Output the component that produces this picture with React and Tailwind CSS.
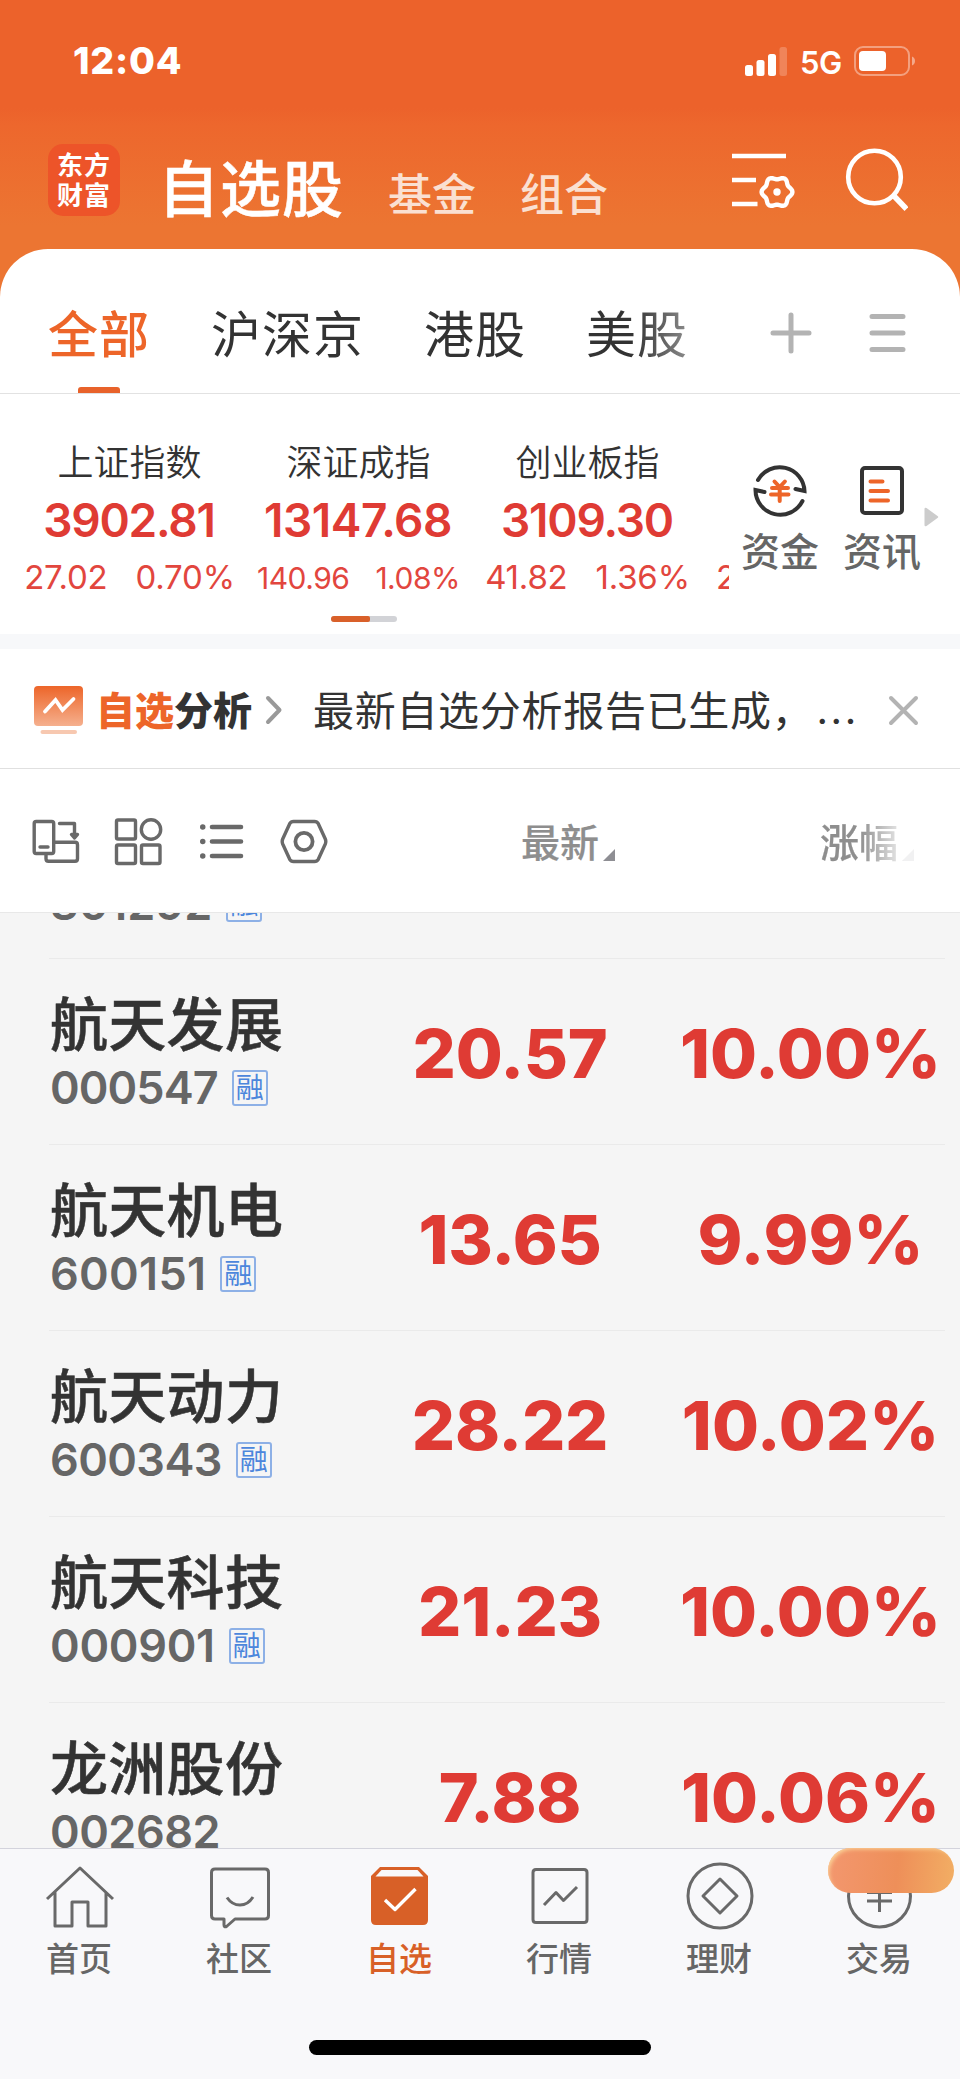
import React from 'react'

const indices = [
  { name: '上证指数', value: '3902.81', change: '27.02', pct: '0.70%' },
  { name: '深证成指', value: '13147.68', change: '140.96', pct: '1.08%', small: true },
  { name: '创业板指', value: '3109.30', change: '41.82', pct: '1.36%' },
]

const stocks = [
  { name: '航天发展', code: '000547', price: '20.57', pct: '10.00%', margin: true, track: 'tracking-[-0.9px]' },
  { name: '航天机电', code: '600151', price: '13.65', pct: '9.99%', margin: true, track: 'tracking-[0.3px]' },
  { name: '航天动力', code: '600343', price: '28.22', pct: '10.02%', margin: true, track: 'tracking-[-0.6px]' },
  { name: '航天科技', code: '000901', price: '21.23', pct: '10.00%', margin: true, track: 'tracking-[-0.3px]' },
  { name: '龙洲股份', code: '002682', price: '7.88', pct: '10.06%', margin: false, track: 'tracking-[-0.5px]' },
]

// six-lobed gear outline around (cx, cy)
function gearPoints(cx, cy) {
  const pts = []
  for (let d = 0; d < 360; d += 5) {
    const a = (d * Math.PI) / 180
    const r = 14 + 1.4 * Math.cos(6 * a)
    pts.push(`${(cx + r * Math.cos(a)).toFixed(2)},${(cy + r * Math.sin(a)).toFixed(2)}`)
  }
  return pts.join(' ')
}

function StatusBar() {
  return (
    <div className="flex h-[124px] items-center justify-between pb-[2px] pl-[73px] pr-[44px]">
      <span className="font-['Inter'] text-[37.5px] font-extrabold leading-none tracking-[0.8px] text-white">12:04</span>
      <div className="flex items-center">
        <svg width="42" height="29" viewBox="0 0 42 29" fill="white">
          <rect x="0" y="18" width="8" height="11" rx="2.5" />
          <rect x="11.5" y="13" width="8" height="16" rx="2.5" />
          <rect x="23" y="7" width="8" height="22" rx="2.5" />
          <rect x="34.5" y="0" width="7.5" height="29" rx="2.5" opacity="0.22" />
        </svg>
        <span className="ml-[13px] mt-[2px] w-[42px] whitespace-nowrap font-['Inter'] text-[31px] font-semibold leading-none tracking-[-0.5px] text-white">5G</span>
        <svg className="ml-[12px]" width="62" height="30" viewBox="0 0 62 30" fill="none">
          <rect x="1" y="1" width="54" height="28" rx="8" stroke="white" strokeOpacity="0.4" strokeWidth="2" />
          <rect x="5" y="5" width="27" height="20" rx="4" fill="white" />
          <path d="M58 10.500c4 1.500 4 7.500 0 9z" fill="white" fillOpacity="0.45" />
        </svg>
      </div>
    </div>
  )
}

function Header() {
  return (
    <div className="flex h-[125px] pl-[48px] pr-[52px]">
      <div className="mt-5 grid h-[72px] w-[72px] shrink-0 grid-cols-[27px_27px] content-center justify-center gap-y-[4px] rounded-[15px] bg-[#ed5429] pb-[3px] text-[26px] font-bold leading-[26px] text-white">
        <span>东</span><span>方</span><span>财</span><span>富</span>
      </div>
      <div className="ml-[38px] mt-[31px] w-[187px] whitespace-nowrap text-[61px] font-medium leading-none tracking-[1px] text-white [-webkit-text-stroke:0.5px_white]">自选股</div>
      <div className="ml-[43px] mt-[46px] whitespace-nowrap text-[44px] font-medium leading-none text-[#fae0d2]">基金</div>
      <div className="ml-[44px] mt-[46px] whitespace-nowrap text-[44px] font-medium leading-none text-[#fae0d2]">组合</div>
      <svg className="ml-auto mt-[22px] shrink-0" width="66" height="64" viewBox="730 146 66 64" fill="none" stroke="white" strokeWidth="4.400">
        <path d="M732 156h54M732 180h24M732 204h25.500" />
        <polygon points={gearPoints(777, 192)} strokeLinejoin="round" />
        <circle cx="777" cy="192" r="3.700" fill="white" stroke="none" />
      </svg>
      <svg className="ml-[48px] mt-[22px] shrink-0" width="64" height="66" viewBox="844 146 64 66" fill="none" stroke="white" strokeWidth="4.600">
        <circle cx="874.500" cy="177" r="26.300" />
        <path d="M893.500 195.500l13 13.500" strokeWidth="5.500" />
      </svg>
    </div>
  )
}

function MarketTabs() {
  return (
    <div className="flex h-[145px] border-b border-[#e2e2e2] pl-[48px] pr-[54px] text-[50px] leading-none tracking-[1px] text-[#333]">
      <div className="-mb-px flex w-[102px] flex-col items-center justify-between whitespace-nowrap pb-px pt-[57px] font-medium text-[#ed6529]">
        全部
        <div className="h-[6px] w-[42px] rounded-t-[3px] bg-[#e8622a]" />
      </div>
      <div className="ml-[61px] whitespace-nowrap pt-[57px]">沪深京</div>
      <div className="ml-[60px] whitespace-nowrap pt-[57px]">港股</div>
      <div className="ml-[60px] pt-[57px]">
        <div className="whitespace-nowrap bg-gradient-to-r from-[#333] from-45% to-[#8c8c8c] bg-clip-text pb-2 text-transparent">美股</div>
      </div>
      <svg className="ml-auto mt-[63px]" width="42" height="42" viewBox="0 0 42 42" stroke="#b3b3b3" strokeWidth="5" strokeLinecap="round">
        <path d="M3 21h36M21 3v36" />
      </svg>
      <svg className="ml-[57px] mt-[64px]" width="37" height="40" viewBox="0 0 37 40" stroke="#b3b3b3" strokeWidth="5" strokeLinecap="round">
        <path d="M3 3.500h31M3 20h31M3 36.500h31" />
      </svg>
    </div>
  )
}

function IndexStrip() {
  return (
    <div className="flex h-[240px]">
      <div className="flex w-[729px] flex-col overflow-hidden pl-[15px]">
        <div className="flex pt-[48px]">
          {indices.map((it) => (
            <div key={it.name} className="flex w-[229px] shrink-0 flex-col items-center">
              <div className="text-[36px] font-[350] leading-none text-[#333]">{it.name}</div>
              <div className={`mt-[19px] pr-[1px] font-['Inter'] text-[46px] font-semibold leading-none text-[#df3b34] ${it.small ? 'tracking-[-0.5px]' : 'tracking-[-1.2px]'}`}>{it.value}</div>
              <div className={`mt-[18px] flex h-[33px] items-center whitespace-nowrap font-['Inter'] leading-none text-[#e2463e] ${it.small ? 'gap-[26px] text-[30px] tracking-[-0.5px]' : 'gap-[28px] text-[33px] tracking-[-0.2px]'}`}>
                <span>{it.change}</span>
                <span>{it.pct}</span>
              </div>
            </div>
          ))}
          <div className="ml-[14px] mt-[119px] font-['Inter'] text-[33px] leading-none text-[#e2463e]">2</div>
        </div>
        <div className="ml-[316px] mt-[22px] flex h-[6px] w-[66px] shrink-0 overflow-hidden rounded-full bg-[#d2d3d7]">
          <div className="w-[39px] rounded-r-[2px] bg-[#d9602a]" />
        </div>
      </div>
      <div className="flex flex-1 pl-[12px] pt-[67px] text-[39px] font-medium leading-none text-[#666]">
        <div className="flex w-[78px] flex-col items-center whitespace-nowrap">
          <svg width="58" height="58" viewBox="751 461 58 58" fill="none" stroke="#333" strokeWidth="4">
            <path strokeLinecap="round" d="M758 480A24.800 24.800 0 0 1 804.500 491L795.500 489" />
            <path strokeLinecap="round" d="M802.500 501A24.800 24.800 0 0 1 755.500 490L764.500 492" />
            <g stroke="#ed6529" strokeLinecap="round">
              <path d="M774.500 481.500l5.200 5.500 5.200-5.500M772 488h16M771 494.500h17.500M779.700 488v13" />
            </g>
          </svg>
          <div className="mt-[11px]">资金</div>
        </div>
        <div className="ml-[24px] flex w-[78px] flex-col items-center whitespace-nowrap">
          <svg width="58" height="58" viewBox="853 461 58 58" fill="none" stroke="#333" strokeWidth="4">
            <rect x="862" y="468" width="40" height="45" rx="3" />
            <path d="M870.500 481.500h12M870.500 491h17.500M870.500 500.500h17.500" stroke="#ed6529" strokeLinecap="round" />
          </svg>
          <div className="mt-[11px]">资讯</div>
        </div>
        <svg className="ml-[3px] mt-[46px]" width="15" height="21" viewBox="0 0 15 21">
          <path d="M0.500 2q0-2 2-1l11 8q1.500 1 0 2l-11 8q-2 1-2-1z" fill="#ccc" />
        </svg>
      </div>
    </div>
  )
}

function NoticeBar() {
  return (
    <div className="flex h-[120px] items-center border-b border-[#e0e0e0] pl-[34px] pr-[41px] pt-[3px]">
      <svg width="49" height="48" viewBox="0 0 49 48" fill="none">
        <defs>
          <linearGradient id="chip" x1="0" y1="0" x2="0" y2="1">
            <stop offset="0" stopColor="#ed6529" />
            <stop offset="1" stopColor="#f5b08e" />
          </linearGradient>
        </defs>
        <rect width="49" height="40" rx="4" fill="url(#chip)" />
        <path d="M11 25.500L21.500 14l7 10L39.500 13" stroke="white" strokeWidth="3.800" strokeLinecap="round" />
        <rect x="6.500" y="44" width="36.500" height="4" rx="2" fill="#f7c8b0" />
      </svg>
      <div className="ml-[13px] w-[158px] whitespace-nowrap pb-[4px] text-[39px] font-black leading-none text-[#333]">
        <span className="text-[#ed6529]">自选</span>分析
      </div>
      <svg className="ml-[11px]" width="18" height="30" viewBox="0 0 18 30" fill="none" stroke="#999" strokeWidth="4" strokeLinecap="round" strokeLinejoin="round">
        <path d="M3 3l11.500 12L3 27" />
      </svg>
      <div className="ml-[30px] flex whitespace-nowrap pb-[3px] text-[41px] leading-none tracking-[0.7px] text-[#333]">
        最新自选分析报告已生成，
        <span className="ml-[3px] mt-[2px] w-[44px] font-['Inter'] text-[40px] tracking-[2.600px]">...</span>
      </div>
      <svg className="ml-auto" width="31" height="31" viewBox="0 0 31 31" stroke="#b3b3b3" strokeWidth="4" strokeLinecap="round">
        <path d="M3 3l25 25M28 3L3 28" />
      </svg>
    </div>
  )
}

function Toolbar() {
  return (
    <div className="flex h-[144px] items-center border-b border-[#e8e8e8] pl-[32px]">
      <svg width="296" height="50" viewBox="32 816 296 50" fill="none" stroke="#696969" strokeWidth="3.400" strokeLinecap="round" strokeLinejoin="round">
        <rect x="34.200" y="821.500" width="19.500" height="32" rx="2" />
        <path d="M40 847h8M59.500 823.500h15V834" />
        <path d="M71.500 834.500h6l-3 3.500z" fill="#696969" />
        <path d="M54 842.300h21q2.500 0 2.500 2.500v14q0 2.500-2.500 2.500H48.500q-2.500 0-2.500-2.500V854" />
        <rect x="116.500" y="820" width="19" height="19" rx="1.500" />
        <circle cx="151" cy="829.500" r="9.700" />
        <rect x="116.500" y="845" width="19" height="18.500" rx="1.500" />
        <rect x="141.500" y="845" width="18.500" height="18.500" rx="1.500" />
        <path d="M212 827h29M212 841.500h29M212 856h29" strokeWidth="4.600" />
        <path d="M202.700 827h.1M202.700 841.500h.1M202.700 856h.1" strokeWidth="5.400" />
        <path d="M293.500 821.500h21q2.500 0 3.800 2.200l7 15.300q1 2.500 0 5l-7 15.300q-1.300 2.200-3.800 2.200h-21q-2.500 0-3.800-2.200l-7-15.300q-1-2.500 0-5l7-15.300q1.300-2.200 3.800-2.200z" />
        <circle cx="304" cy="841.500" r="8.600" strokeWidth="3.800" />
      </svg>
      <div className="ml-[193px] flex items-end pt-[3px]">
        <div className="whitespace-nowrap pb-1 text-[39px] font-medium leading-none text-[#8e8e8e] [-webkit-text-stroke:0.2px_#8e8e8e]">最新</div>
        <svg className="mb-[3px] ml-[4px]" width="12" height="12" viewBox="0 0 12 12"><path d="M12 0v12H0z" fill="#8e8e93" /></svg>
      </div>
      <div className="ml-[205px] flex items-end pt-[3px] [mask-image:linear-gradient(to_right,black_42%,rgba(0,0,0,0.12)_90%)]">
        <div className="whitespace-nowrap pb-1 text-[39px] font-medium leading-none text-[#8e8e8e] [-webkit-text-stroke:0.2px_#8e8e8e]">涨幅</div>
        <svg className="mb-[3px] ml-[4px]" width="12" height="12" viewBox="0 0 12 12"><path d="M12 0v12H0z" fill="#8e8e93" /></svg>
      </div>
    </div>
  )
}

function CodeLine({ code, margin, track }) {
  return (
    <div className="flex items-center">
      <span className={`font-['Inter'] text-[45px] font-semibold leading-none text-[#666] ${track}`}>{code}</span>
      {margin && (
        <span className="ml-[14px] flex h-[36px] w-[36px] items-center justify-center rounded-[3px] border-2 border-[#8db0e6] pb-[3px] text-[28px] leading-none text-[#4c86dc]">融</span>
      )}
    </div>
  )
}

function StockRow({ s }) {
  return (
    <div className="ml-[49px] mr-[15px] flex h-[186px] shrink-0 border-t border-[#eaeaea]">
      <div className="w-[316px] shrink-0 pl-px pt-[33px]">
        <div className="whitespace-nowrap text-[58px] font-medium leading-none tracking-[0.3px] text-[#333] [-webkit-text-stroke:0.5px_#333]">{s.name}</div>
        <div className="mt-[15px]">
          <CodeLine code={s.code} margin={s.margin} track={s.track} />
        </div>
      </div>
      <div className="w-[290px] shrink-0 pt-[60px] text-center font-['Inter'] text-[68px] font-extrabold leading-none tracking-[-0.3px] text-[#df3b34]">{s.price}</div>
      <div className="ml-[20px] flex flex-1 justify-center whitespace-nowrap pl-px pt-[60px] font-['Inter'] text-[68px] font-extrabold leading-none text-[#df3b34]">{s.pct}</div>
    </div>
  )
}

const navItems = [
  {
    label: '首页',
    icon: <path d="M-33 3L0-28 33 3M-25-4v34h17V6H8v24h18V-4" />,
  },
  {
    label: '社区',
    icon: <path d="M-25-27h50q3.500 0 3.500 3.500v43q0 3.500-3.500 3.500H-5l-8.500 7.500q-2.500 1-2.500-1.500v-6h-9q-3.500 0-3.500-3.500v-43q0-3.500 3.500-3.500zM-13 1.500Q-8 9 0 9T13 1" />,
  },
  {
    label: '自选',
    active: true,
    icon: (
      <>
        <path d="M-20-29h39L28-20V24q0 5-5 5h-47q-5 0-5-5v-44z" fill="#d86027" stroke="none" />
        <path d="M-18.500-26h36l6 6.500h-48z" fill="#f8f8fa" stroke="none" />
        <path d="M-15 4L-5 13.500 15.500-7" stroke="white" strokeWidth="3.400" />
      </>
    ),
  },
  {
    label: '行情',
    icon: <path d="M-24-26.500h48q3 0 3 3v47q0 3-3 3h-48q-3 0-3-3v-47q0-3 3-3zM-16 9L-4-3.500 3.500 4.500 17-9" />,
  },
  {
    label: '理财',
    icon: <path d="M-32 0a32 32 0 1 0 64 0a32 32 0 1 0-64 0M0-17L17 0 0 17-17 0z" />,
  },
  {
    label: '交易',
    icon: <path d="M-31.500 0a31 31 0 1 0 62 0a31 31 0 1 0-62 0M-13 5h25M-.5-15V16M-13-3.500h25" />,
    promo: true,
  },
]

function BottomNav() {
  return (
    <div className="flex h-[231px] shrink-0 flex-col items-center border-t border-[#d3d3dc] bg-[#f8f8fa]">
      <div className="grid w-full grid-cols-6">
        {navItems.map((n) => (
          <div key={n.label} className={`relative flex flex-col items-center pt-[11px] text-[33px] font-medium leading-none ${n.active ? 'text-[#d86027]' : 'text-[#666]'}`}>
            <svg width="72" height="72" viewBox="-36 -36 72 72" fill="none" stroke="#696969" strokeWidth="3" strokeLinejoin="round">
              {n.icon}
            </svg>
            <div className="mt-[9px] pr-[2px]">{n.label}</div>
            {n.promo && (
              <div className="absolute left-[28px] -top-px h-[45px] w-[126px] rounded-[23px] bg-[linear-gradient(95deg,#f3976f,#ee8f59_55%,#f2ae64)] shadow-[inset_3px_3px_4px_-2px_#fbd79a]" />
            )}
          </div>
        ))}
      </div>
      <div className="mb-[24px] mt-auto h-[15px] w-[342px] rounded-full bg-black" />
    </div>
  )
}

export default function App() {
  return (
    <div className="flex h-[2079px] w-[960px] flex-col overflow-hidden bg-white font-['Noto_Sans_CJK_SC',sans-serif]">
      <div className="bg-[linear-gradient(to_bottom,#ec622b_0px,#ec622b_108px,#ed672d_125px,#ec7532_225px,#ec7532_100%)]">
        <StatusBar />
        <Header />
        <div className="rounded-t-[48px] bg-white">
          <MarketTabs />
        </div>
      </div>
      <IndexStrip />
      <div className="h-[15px] shrink-0 bg-[#f7f8fa]" />
      <NoticeBar />
      <Toolbar />
      <div className="flex h-[935px] shrink-0 flex-col overflow-hidden bg-[#f5f5f5]">
        {/* tail of the row that is scrolled under the toolbar */}
        <div className="flex h-[45px] shrink-0 flex-col justify-end overflow-hidden pb-[32px] pl-[50px]">
          <CodeLine code="301292" margin track="tracking-[0px]" />
        </div>
        {stocks.map((s) => (
          <StockRow key={s.code} s={s} />
        ))}
      </div>
      <BottomNav />
    </div>
  )
}
